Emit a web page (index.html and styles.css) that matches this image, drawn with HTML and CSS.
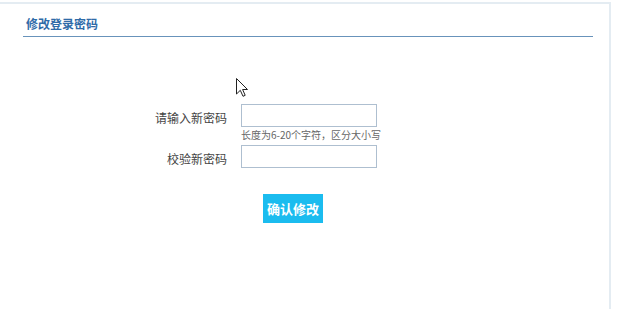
FILE: index.html
```html
<!DOCTYPE html>
<html lang="zh-CN">
<head>
<meta charset="utf-8">
<title>修改登录密码</title>
<link rel="stylesheet" href="styles.css">
</head>
<body>
<div class="panel">
  <div class="panel-head"><h2 class="panel-title">修改登录密码</h2></div>
  <form class="pwd-form">
    <div class="row">
      <label class="label" for="p1">请输入新密码</label>
      <div class="field">
        <input class="input" id="p1" type="password">
        <div class="hint">长度为6-20个字符，区分大小写</div>
      </div>
    </div>
    <div class="row">
      <label class="label" for="p2">校验新密码</label>
      <div class="field">
        <input class="input" id="p2" type="password">
      </div>
    </div>
    <div class="actions">
      <button class="btn" type="button">确认修改</button>
    </div>
  </form>
  <svg class="cursor" width="12" height="19" viewBox="0 0 12 19">
    <path d="M0.5 0.5 L0.5 16 L4.3 12.3 L7 18.3 L9.2 17.3 L6.6 11.5 L11.5 11.5 Z" fill="#fff" stroke="#222" stroke-width="1" stroke-linejoin="miter"/>
  </svg>
</div>
</body>
</html>
```

FILE: styles.css
```css
html, body {
  margin: 0;
  padding: 0;
  background: #fff;
}
body {
  font-family: "Noto Sans CJK SC", "Noto Sans", "Liberation Sans", sans-serif;
  color: #333;
  width: 620px;
  height: 309px;
  overflow: hidden;
}
.panel {
  position: relative;
  margin-top: 2px;
  width: 609px;
  height: 305px;
  border-top: 2px solid #e4ecf2;
  border-right: 2px solid #e4ecf2;
}
.panel-head {
  margin-left: 23px;
  width: 570px;
  padding-top: 11px;
  padding-bottom: 3px;
  border-bottom: 1px solid #6893bb;
}
.panel-title {
  margin: 0;
  padding-left: 3px;
  font-size: 12px;
  line-height: 18px;
  font-weight: bold;
  color: #2f6ba8;
}
.pwd-form {
  padding-top: 67px;
}
.row {
  display: flex;
  align-items: flex-start;
  column-gap: 14px;
}
.label {
  width: 227px;
  text-align: right;
  font-size: 12px;
  line-height: 23px;
  color: #444;
  padding-top: 2px;
}
.field {
  display: flex;
  flex-direction: column;
}
.input {
  box-sizing: border-box;
  width: 136px;
  height: 23px;
  margin: 0;
  border: 1px solid #aebfd0;
  background: #fff;
  outline: none;
}
.hint {
  font-size: 10px;
  line-height: 14px;
  color: #666;
  margin-top: 1px;
  margin-bottom: 3px;
  white-space: nowrap;
}
.actions {
  padding-left: 263px;
  padding-top: 24px;
}
.btn {
  width: 60px;
  height: 29px;
  padding: 0;
  border: none;
  background: #1bbcef;
  color: #fff;
  font-family: "Noto Sans CJK SC", "Noto Sans", sans-serif;
  font-size: 13px;
  font-weight: bold;
  line-height: 29px;
}
.cursor {
  position: absolute;
  left: 236px;
  top: 74px;
}
```
